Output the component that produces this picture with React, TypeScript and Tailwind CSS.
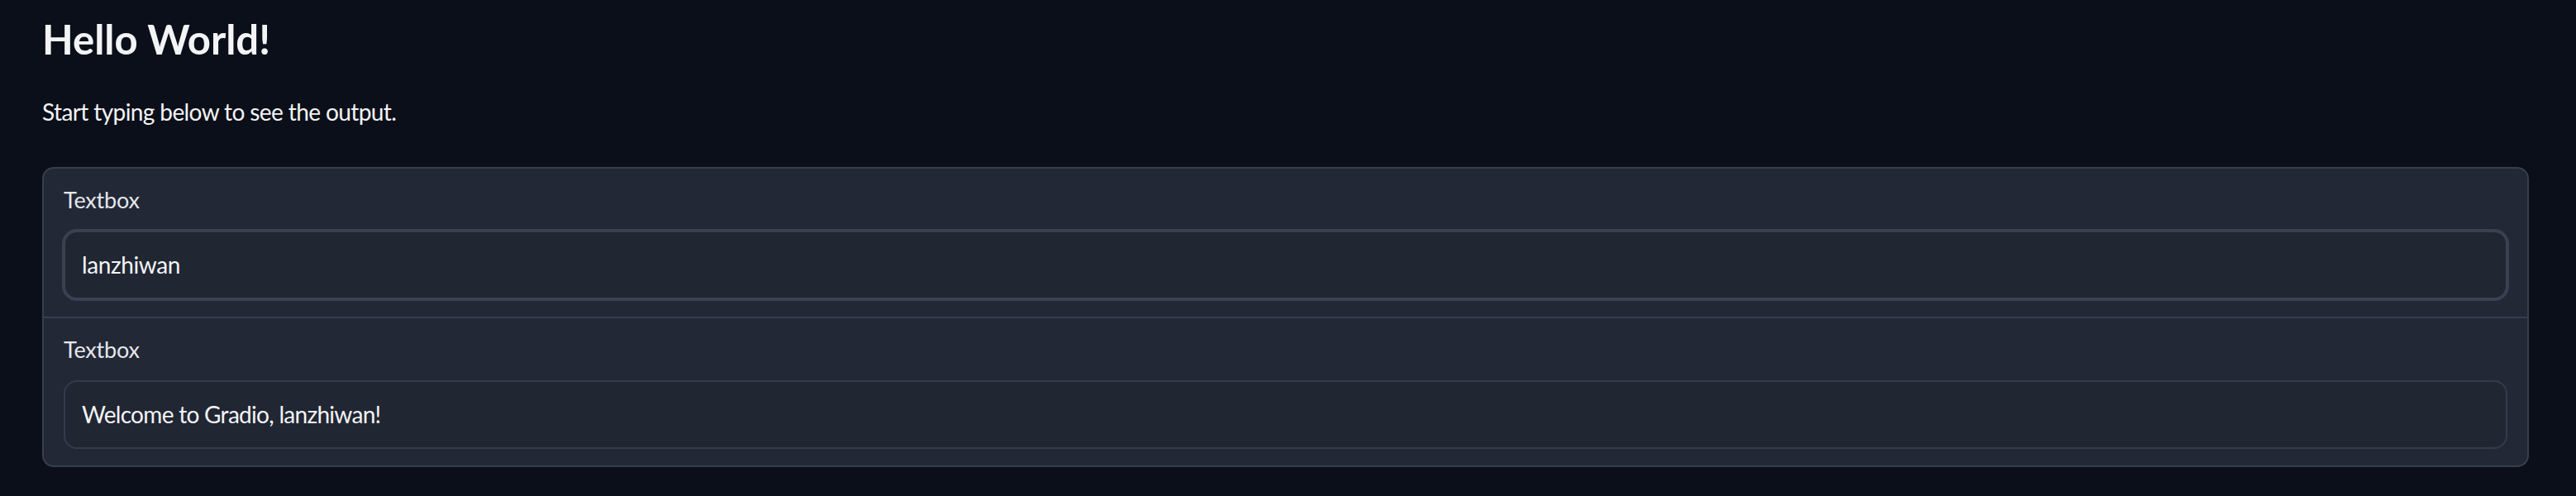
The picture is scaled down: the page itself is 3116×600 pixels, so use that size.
export default function App() {
  const font = { fontFamily: "Lato, 'Noto Sans', sans-serif" };

  return (
    <div className="min-h-[600px] w-full bg-[#0b0f19] pl-[51px] pt-[18px]" style={font}>
      {/* markdown header */}
      <h1 className="text-[49px] leading-[1.2] font-bold text-[#f3f4f6]">Hello World!</h1>
      <p className="mt-[42px] text-[28px] leading-[1.2] tracking-[-0.6px] text-[#f3f4f6]">
        Start typing below to see the output.
      </p>

      {/* form with two textboxes */}
      <div className="mt-[50px] flex w-[3008px] flex-col gap-[2px] overflow-hidden rounded-[14px] border-2 border-[#373e4e] bg-[#373e4e]">
        <div className="bg-[#222836] px-[24px] pt-[22px] pb-[21px]">
          <div className="mb-[21px] text-[27px] leading-[32px] tracking-[-0.2px] text-[#e5e7eb]">Textbox</div>
          <div className="flex h-[83px] items-center rounded-2xl border-2 border-[#3a4150] bg-[#212633] px-[20px] text-[28px] leading-[1.2] tracking-[-0.4px] text-[#f3f4f6] ring-2 ring-[#3a4150]">
            lanzhiwan
          </div>
        </div>
        <div className="bg-[#222836] px-[24px] pt-[22px] pb-[20px]">
          <div className="mb-[21px] text-[27px] leading-[32px] tracking-[-0.2px] text-[#e5e7eb]">Textbox</div>
          <div className="flex h-[83px] items-center rounded-2xl border-2 border-[#343b4b] bg-[#212633] px-[20px] text-[28px] leading-[1.2] tracking-[-0.7px] text-[#f3f4f6]">
            Welcome to Gradio, lanzhiwan!
          </div>
        </div>
      </div>
    </div>
  );
}
